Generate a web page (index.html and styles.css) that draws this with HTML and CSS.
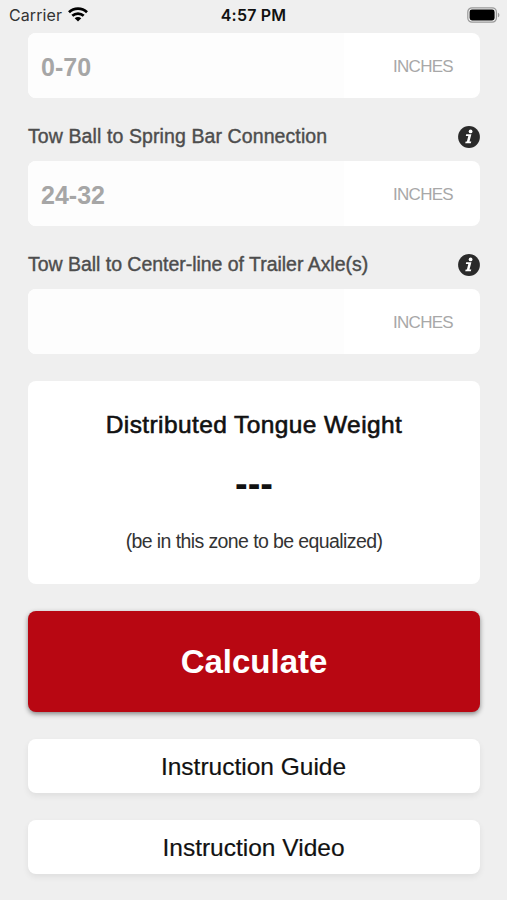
FILE: index.html
```
<!DOCTYPE html>
<html lang="en">

<head>
    <meta charset="UTF-8" />
    <meta name="viewport" content="width=device-width, initial-scale=1.0" />
    <title>Tongue Weight Calculator</title>
    <link rel="stylesheet" href="styles.css">
</head>

<body>
    <header class="status-bar">
        <div class="status-left">
            <span class="carrier">Carrier</span>
            <svg class="wifi" viewBox="0 0 20 15" width="20" height="15">
                <g fill="none" stroke="#000" stroke-width="2.7">
                    <path d="M1 5.3C6 .4 14 .4 19 5.3" />
                    <path d="M4.3 8.8C7.5 5.8 12.5 5.8 15.7 8.8" />
                </g>
                <path d="M6.7 11.2C8.6 9.5 11.4 9.5 13.3 11.2L10 14.5Z" />
            </svg>
        </div>
        <span class="time">4:57 PM</span>
        <div class="status-right">
            <svg viewBox="0 0 33 16" width="33" height="16">
                <rect x=".8" y=".8" width="28.6" height="14.4" rx="4.2" fill="none" stroke="#999" stroke-width="1.2" />
                <rect x="2.6" y="2.6" width="25" height="10.8" rx="2.4" />
                <path d="M30.9 5.7C32.9 6.3 32.9 9.7 30.9 10.3Z" fill="#999" />
            </svg>
        </div>
    </header>

    <main class="calculator">
        <div class="field">
            <input type="text" class="field-input" placeholder="0-70">
            <span class="field-unit">INCHES</span>
        </div>

        <div class="label-row">
            <label class="label-spring">Tow Ball to Spring Bar Connection</label>
            <svg class="info-icon" viewBox="0 0 22 22" width="22" height="22">
                <circle cx="11" cy="11" r="10.9" fill="#2a2a2a" />
                <g fill="#fff">
                    <circle cx="12.6" cy="5.4" r="1.9" />
                    <path d="M8.2 8.3H13.4L11.5 15.5H13.3L12.8 17.3H7.2L7.7 15.5H8.9L10.3 10H7.8Z" />
                </g>
            </svg>
        </div>
        <div class="field">
            <input type="text" class="field-input" placeholder="24-32">
            <span class="field-unit">INCHES</span>
        </div>

        <div class="label-row">
            <label class="label-axle">Tow Ball to Center-line of Trailer Axle(s)</label>
            <svg class="info-icon" viewBox="0 0 22 22" width="22" height="22">
                <circle cx="11" cy="11" r="10.9" fill="#2a2a2a" />
                <g fill="#fff">
                    <circle cx="12.6" cy="5.4" r="1.9" />
                    <path d="M8.2 8.3H13.4L11.5 15.5H13.3L12.8 17.3H7.2L7.7 15.5H8.9L10.3 10H7.8Z" />
                </g>
            </svg>
        </div>
        <div class="field">
            <input type="text" class="field-input">
            <span class="field-unit">INCHES</span>
        </div>

        <section class="result-card">
            <h2 class="result-title">Distributed Tongue Weight</h2>
            <div class="result-value">---</div>
            <p class="result-note">(be in this zone to be equalized)</p>
        </section>

        <button type="button" class="btn btn-primary">Calculate</button>
        <button type="button" class="btn btn-secondary">Instruction Guide</button>
        <button type="button" class="btn btn-secondary">Instruction Video</button>
    </main>
</body>

</html>
```
FILE: styles.css
```
* {
    box-sizing: border-box;
}

body {
    margin: 0;
    height: 900px;
    overflow: hidden;
    font-family: "Liberation Sans", Arial, sans-serif;
    background-color: #efefef;
    color: #111;
}

.status-bar {
    display: grid;
    grid-template-columns: 1fr auto 1fr;
    align-items: center;
    height: 33px;
    padding: 0 7px 4px 9px;
    font-family: Inter, sans-serif;
    font-size: 16px;
}

.status-left {
    display: flex;
    align-items: center;
    gap: 6px;
}

.carrier {
    color: #333;
    letter-spacing: 0.1px;
}

.time {
    margin-right: 2px;
    font-weight: 600;
    letter-spacing: 0.2px;
}

.status-right {
    display: flex;
    justify-content: flex-end;
}

.calculator {
    display: flex;
    flex-direction: column;
    padding: 0 27px 0 28px;
}

.field {
    display: flex;
    align-items: center;
    height: 65px;
    background-color: #fff;
    border-radius: 8px;
    overflow: hidden;
}

.field-input {
    width: 316px;
    height: 100%;
    padding: 3px 13px 0;
    border: none;
    background-color: #fdfdfd;
    font-family: inherit;
    font-size: 25px;
    font-weight: bold;
}

.field-input::placeholder {
    color: #a6a6a6;
}

.field-unit {
    flex: 1;
    padding-top: 2px;
    padding-right: 27px;
    text-align: right;
    font-size: 17px;
    letter-spacing: -0.7px;
    color: #a8a8a8;
}

.label-row {
    display: flex;
    justify-content: space-between;
    align-items: center;
    height: 63px;
    padding-bottom: 13px;
    padding-top: 27px;
    font-size: 19.5px;
    color: #4d4d4d;
    -webkit-text-stroke: 0.4px #4d4d4d;
}

.label-spring {
    letter-spacing: 0.1px;
}

.label-axle {
    letter-spacing: -0.03px;
}

.result-card {
    display: flex;
    flex-direction: column;
    align-items: center;
    height: 203px;
    margin: 27px 0;
    padding-top: 30px;
    background-color: #fff;
    border-radius: 8px;
}

.result-title {
    margin: 0;
    font-size: 24.5px;
    font-weight: normal;
    line-height: 28px;
    letter-spacing: 0.4px;
    -webkit-text-stroke: 0.6px #111;
}

.result-value {
    margin-top: 25px;
    font-size: 38px;
    font-weight: bold;
    line-height: 40px;
}

.result-note {
    margin: 25px 0 0;
    font-size: 19.5px;
    line-height: 24px;
    letter-spacing: -0.6px;
    color: #333;
}

.btn {
    padding: 1px 0 0;
    border: none;
    border-radius: 8px;
    font-family: inherit;
    cursor: pointer;
}

.btn-primary {
    height: 101px;
    background-color: #b80712;
    color: #fff;
    font-size: 33px;
    font-weight: bold;
    box-shadow: 0 2px 5px rgba(0, 0, 0, 0.45);
}

.btn-secondary {
    height: 54px;
    margin-top: 27px;
    padding: 1px 1px 0 0;
    background-color: #fff;
    color: #111;
    font-size: 24.5px;
    -webkit-text-stroke: 0.2px #111;
    box-shadow: 0 3px 6px rgba(0, 0, 0, 0.07);
}
```
